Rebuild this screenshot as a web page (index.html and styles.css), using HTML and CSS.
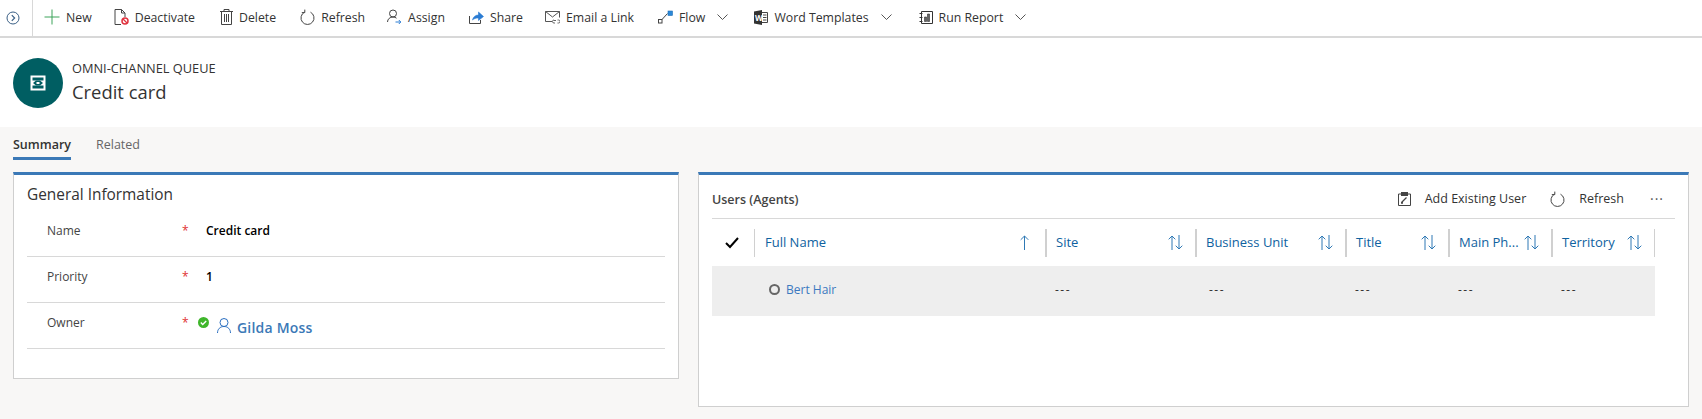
FILE: index.html
```html
<!DOCTYPE html>
<html lang="en">
<head>
    <meta charset="UTF-8">
    <meta name="viewport" content="width=device-width, initial-scale=1.0">
    <title>Credit card - Omni-channel Queue</title>
    <link rel="stylesheet" href="styles.css">
</head>
<body>
    <div class="commandbar">
        <div class="nav-toggle">
            <svg width="14" height="14" viewBox="0 0 14 14" fill="none" stroke="#3a5f85"><circle cx="7" cy="7" r="6"/><path d="M5.8 4.2 8.6 7 5.8 9.8" stroke-width="1.2"/></svg>
        </div>
        <div class="command cmd-new">
            <svg width="16" height="16" viewBox="0 0 16 16" stroke="#3da35a"><path d="M8 .5v15M.5 8h15"/></svg>
            <span>New</span>
        </div>
        <div class="command cmd-deactivate">
            <svg width="15" height="16" viewBox="0 0 15 16" fill="none" stroke="#444"><path d="M1 15.5V.5h6.500l3.500 3.500v4M7.500.5V4H11M1 15.500h6"/><circle cx="11" cy="12" r="3" stroke="#e0333f" stroke-width="1.500"/><path d="M9 10l4 4" stroke="#e0333f" stroke-width="1.300"/></svg>
            <span>Deactivate</span>
        </div>
        <div class="command cmd-delete">
            <svg width="13" height="16" viewBox="0 0 13 16" fill="none" stroke="#444"><path d="M0 2.500h13M4 2.500V.5h5v2M1.500 2.500v13h10v-13M4.500 5v8M6.500 5v8M8.500 5v8"/></svg>
            <span>Delete</span>
        </div>
        <div class="command cmd-refresh">
            <svg width="15" height="16" viewBox="0 0 15 16" fill="none" stroke="#444"><path d="M4.500 3.200a6.500 6.500 0 1 0 6 0M4.800 .6v3H1.800"/></svg>
            <span>Refresh</span>
        </div>
        <div class="command cmd-assign">
            <svg width="15" height="16" viewBox="0 0 15 16" fill="none" stroke="#444"><circle cx="6" cy="4.500" r="3.500"/><path d="M.5 13c0-3 2.500-5 5.500-5 1.500 0 2.600.4 3.500 1.200"/><path d="M8.500 13h5M11.800 11l2 2-2 2" stroke="#2b7cd3"/></svg>
            <span>Assign</span>
        </div>
        <div class="command cmd-share">
            <svg width="15" height="16" viewBox="0 0 15 16" fill="none" stroke="#444"><path d="M.5 7v7.500h11V11"/><path d="M3.500 11c.5-3 3-5 6-5V3l5 4.500-5 4V9c-2.500 0-4.500.5-6 2z" fill="#2b7cd3" stroke="#2b7cd3" stroke-width=".6"/></svg>
            <span>Share</span>
        </div>
        <div class="command cmd-email">
            <svg width="15" height="14" viewBox="0 0 15 14" fill="none" stroke="#555"><path d="M7 11.500H.5v-10h14v6"/><path d="M.5 1.500 7.500 7l7-5.500"/><path d="M9 10.500h2M10 13h-1a1.500 1.500 0 0 1 0-3M12.500 10h1a1.500 1.500 0 0 1 0 3h-1" stroke-width=".9"/></svg>
            <span>Email a Link</span>
        </div>
        <div class="command cmd-flow">
            <svg width="15" height="14" viewBox="0 0 15 14" fill="none"><rect x=".5" y="9.500" width="3.500" height="3.500" stroke="#444"/><path d="M4 9.500 9.500 3.500" stroke="#444"/><rect x="10" y="1" width="4.500" height="4.500" fill="#2b88d8" stroke="#1f6fb5" stroke-width=".6"/></svg>
            <span>Flow</span>
            <svg class="chev" width="11" height="6" viewBox="0 0 11 6" fill="none" stroke="#555"><path d="M.5.5l5 5 5-5"/></svg>
        </div>
        <div class="command cmd-word">
            <svg width="14" height="15" viewBox="0 0 14 15"><path d="M0 1.500 8 0v15l-8-1.500z" fill="#333"/><path d="M8 2.500h5.500v10H8" fill="#fff" stroke="#444"/><path d="M9 5h3.500M9 7.500h3.500M9 10h3.500" stroke="#444"/><text x="1" y="10.500" class="word-letter">W</text></svg>
            <span>Word Templates</span>
            <svg class="chev" width="11" height="6" viewBox="0 0 11 6" fill="none" stroke="#555"><path d="M.5.5l5 5 5-5"/></svg>
        </div>
        <div class="command cmd-report">
            <svg width="14" height="15" viewBox="0 0 14 15" fill="none" stroke="#333"><path d="M2.500 1.500h11v12h-11zM.5 3.500h3M.5 7.500h3M.5 11.500h3"/><path d="M5.500 7h2v4.500h-2zM8.500 4h2v7.500h-2z" fill="#666" stroke="#333" stroke-width=".6"/></svg>
            <span>Run Report</span>
            <svg class="chev" width="11" height="6" viewBox="0 0 11 6" fill="none" stroke="#555"><path d="M.5.5l5 5 5-5"/></svg>
        </div>
    </div>

    <div class="record-header">
        <div class="record-avatar">
            <svg width="16" height="16" viewBox="0 0 16 16"><rect x=".5" y=".5" width="15" height="15" fill="#fff"/><path d="M2.500 2.500h11v3h-11zM2.500 10.500h11v3h-11z" fill="#005e62"/><path d="M3 8l3-2.500h4L13 8l-3 2.500H6z" fill="#005e62"/><rect x="6.500" y="7" width="3" height="2" fill="#fff"/></svg>
        </div>
        <div class="record-title">
            <div class="record-type">OMNI-CHANNEL QUEUE</div>
            <div class="record-name">Credit card</div>
        </div>
    </div>

    <div class="content">
        <div class="tabs">
            <div class="tab tab-active">Summary</div>
            <div class="tab">Related</div>
        </div>

        <div class="panels">
            <div class="card card-general">
                <h2 class="card-title">General Information</h2>
                <div class="form-row">
                    <div class="form-label">Name</div>
                    <div class="required">*</div>
                    <div class="form-value">Credit card</div>
                </div>
                <div class="form-row">
                    <div class="form-label">Priority</div>
                    <div class="required">*</div>
                    <div class="form-value">1</div>
                </div>
                <div class="form-row">
                    <div class="form-label">Owner</div>
                    <div class="required">*</div>
                    <div class="owner">
                        <svg class="presence" width="11" height="11" viewBox="0 0 11 11"><circle cx="5.500" cy="5.500" r="5.500" fill="#3fb62b"/><path d="M2.800 5.600l1.900 1.900 3.500-3.500" fill="none" stroke="#fff" stroke-width="1.400"/></svg>
                        <svg class="person" width="14" height="15" viewBox="0 0 14 15" fill="none" stroke="#2b6fc0"><circle cx="7" cy="4.500" r="4"/><path d="M.5 15c0-3.800 2.600-6.500 6.500-6.500s6.500 2.700 6.500 6.500"/></svg>
                        <a class="owner-name">Gilda Moss</a>
                    </div>
                </div>
            </div>

            <div class="card card-users">
                <div class="grid-toolbar">
                    <div class="grid-name">Users (Agents)</div>
                    <div class="grid-actions">
                        <div class="grid-action action-add">
                            <svg width="13" height="14" viewBox="0 0 13 14" fill="none" stroke="#444"><path d="M3.500 2H.5v11.500h12V2h-3"/><rect x="3.500" y=".5" width="6" height="3" fill="#444"/><path d="M3.500 10.500l5-5M3 11h2" stroke-width="1.300"/></svg>
                            <span>Add Existing User</span>
                        </div>
                        <div class="grid-action action-refresh">
                            <svg width="15" height="16" viewBox="0 0 15 16" fill="none" stroke="#444"><path d="M4.500 3.200a6.500 6.500 0 1 0 6 0M4.800 .6v3H1.800"/></svg>
                            <span>Refresh</span>
                        </div>
                        <div class="grid-more">···</div>
                    </div>
                </div>

                <div class="grid-table">
                    <div class="grid-head">
                        <div class="head-check">
                            <svg width="14" height="12" viewBox="0 0 14 12" fill="none" stroke="#000" stroke-width="2"><path d="M1 6l4 4 8-9"/></svg>
                        </div>
                        <div class="head-cell"><span class="head-text">Full Name</span>
                            <svg class="sort-one" width="9" height="15" viewBox="0 0 9 15" fill="none" stroke="#2f79b5"><path d="M4.500 15V1M.7 4.800 4.500 1l3.800 3.800"/></svg>
                        </div>
                        <div class="head-cell thick"><span class="head-text">Site</span>
                            <svg width="15" height="15" viewBox="0 0 15 15" fill="none" stroke="#2f79b5"><path d="M4 15V1M.7 4.300 4 1l3.300 3.300M11 0v14M7.700 10.700 11 14l3.300-3.300"/></svg>
                        </div>
                        <div class="head-cell thick"><span class="head-text">Business Unit</span>
                            <svg width="15" height="15" viewBox="0 0 15 15" fill="none" stroke="#2f79b5"><path d="M4 15V1M.7 4.300 4 1l3.300 3.300M11 0v14M7.700 10.700 11 14l3.300-3.300"/></svg>
                        </div>
                        <div class="head-cell thick"><span class="head-text">Title</span>
                            <svg width="15" height="15" viewBox="0 0 15 15" fill="none" stroke="#2f79b5"><path d="M4 15V1M.7 4.300 4 1l3.300 3.300M11 0v14M7.700 10.700 11 14l3.300-3.300"/></svg>
                        </div>
                        <div class="head-cell thick"><span class="head-text">Main Ph...</span>
                            <svg width="15" height="15" viewBox="0 0 15 15" fill="none" stroke="#2f79b5"><path d="M4 15V1M.7 4.300 4 1l3.300 3.300M11 0v14M7.700 10.700 11 14l3.300-3.300"/></svg>
                        </div>
                        <div class="head-cell thick last"><span class="head-text">Territory</span>
                            <svg width="15" height="15" viewBox="0 0 15 15" fill="none" stroke="#2f79b5"><path d="M4 15V1M.7 4.300 4 1l3.300 3.300M11 0v14M7.700 10.700 11 14l3.300-3.300"/></svg>
                        </div>
                    </div>
                    <div class="grid-row">
                        <div></div>
                        <div class="cell-name"><span class="status-dot"></span><a class="user-link">Bert Hair</a></div>
                        <div class="cell">---</div>
                        <div class="cell cell-unit">---</div>
                        <div class="cell">---</div>
                        <div class="cell">---</div>
                        <div class="cell">---</div>
                    </div>
                </div>
            </div>
        </div>
    </div>
</body>
</html>
```

FILE: styles.css
```css
* {
    box-sizing: border-box;
}
html, body {
    height: 100%;
}
body {
    margin: 0;
    overflow: hidden;
    display: flex;
    flex-direction: column;
    font-family: "Open Sans", "Noto Sans", Arial, sans-serif;
    font-size: 12px;
    color: #333;
    background: #fff;
}

/* command bar */
.commandbar {
    display: flex;
    align-items: center;
    height: 38px;
    padding-bottom: 2px;
    border-bottom: 2px solid #d8d8d8;
    flex: none;
    font-size: 12.3px;
}
.nav-toggle {
    width: 33px;
    height: 36px;
    margin-bottom: -2px;
    padding-left: 6px;
    display: flex;
    align-items: center;
    border-right: 1px solid #d8d8d8;
}
.command {
    display: flex;
    align-items: center;
    white-space: nowrap;
    gap: 6px;
}
.chev {
    margin-left: 6px;
}
.cmd-new { margin-left: 11px; }
.cmd-deactivate { margin-left: 22px; }
.cmd-delete { margin-left: 25px; }
.cmd-refresh { margin-left: 24px; }
.cmd-assign { margin-left: 22px; }
.cmd-share { margin-left: 24px; }
.cmd-email { margin-left: 22px; }
.cmd-flow { margin-left: 24px; }
.cmd-word { margin-left: 26px; }
.cmd-report { margin-left: 27px; }
.word-letter {
    font-size: 8px;
    font-weight: 700;
    fill: #fff;
}

/* record header */
.record-header {
    display: flex;
    align-items: center;
    height: 89px;
    padding-left: 13px;
    flex: none;
}
.record-avatar {
    width: 50px;
    height: 50px;
    border-radius: 50%;
    background: #005e62;
    display: flex;
    align-items: center;
    justify-content: center;
    margin-right: 9px;
}
.record-type {
    font-size: 12.8px;
    line-height: 16px;
}
.record-name {
    margin-top: 2px;
    font-size: 18.4px;
    line-height: 28px;
}

/* tabs and cards */
.content {
    flex: 1;
    background: #f8f7f6;
    padding: 0 13px;
}
.tabs {
    display: flex;
    height: 45px;
    padding-top: 7px;
}
.tab {
    height: 26px;
    margin-right: 25px;
    font-size: 12.5px;
    color: #666;
    line-height: 22px;
}
.tab-active {
    font-weight: 600;
    color: #333;
    border-bottom: 3px solid #3b79b7;
    height: 26px;
}
.panels {
    display: flex;
    align-items: flex-start;
    gap: 19px;
}
.card {
    background: #fff;
    border: 1px solid #cfcfcf;
    border-top: 3px solid #3b79b7;
}
.card-general {
    width: 666px;
    height: 207px;
    padding: 0 13px;
}
.card-users {
    width: 991px;
    height: 235px;
    padding: 0 13px;
}
.card-title {
    margin: 0;
    height: 36px;
    font-size: 15.4px;
    font-weight: 400;
    line-height: 39px;
}
.form-row {
    display: grid;
    grid-template-columns: 155px 24px 1fr;
    height: 46px;
    padding-top: 11px;
    line-height: 18px;
    border-bottom: 1px solid #d8d8d8;
}
.form-label {
    padding-left: 20px;
    color: #444;
}
.required {
    color: #e03030;
}
.form-value {
    font-weight: 600;
    color: #000;
}
.owner {
    display: flex;
    margin-left: -8px;
}
.presence {
    margin-top: 3px;
}
.person {
    margin: 4px 6px 0 8px;
}
.owner-name {
    margin-top: 5px;
    font-size: 14px;
    letter-spacing: .2px;
    font-weight: 600;
    color: #3b79b7;
}

/* users grid */
.grid-toolbar {
    display: flex;
    align-items: center;
    justify-content: space-between;
    height: 44px;
    padding-top: 4px;
    border-bottom: 1px solid #d8d8d8;
    font-size: 12.5px;
}
.grid-name {
    margin-top: 2px;
    font-weight: 600;
    color: #444;
}
.grid-actions {
    display: flex;
    align-items: center;
    margin-right: 11px;
}
.grid-action {
    display: flex;
    align-items: center;
}
.action-add svg {
    margin-right: 14px;
}
.action-refresh {
    margin-left: 24px;
}
.action-refresh svg {
    margin-right: 14px;
}
.grid-more {
    margin-left: 26px;
    font-size: 14px;
    letter-spacing: 1px;
    color: #555;
}
.grid-table {
    width: 943px;
}
.grid-head,
.grid-row {
    display: grid;
    grid-template-columns: 42px 291px 150px 150px 103px 103px 104px;
}
.grid-head {
    height: 28px;
    margin-top: 10px;
}
.head-check {
    display: flex;
    align-items: center;
    padding-left: 13px;
}
.head-cell {
    display: flex;
    align-items: center;
    justify-content: space-between;
    padding: 0 12px 2px 10px;
    border-left: 1px solid #d0d0d0;
    font-size: 13px;
    color: #0f62a0;
}
.head-cell.thick {
    border-left-width: 2px;
    padding-left: 9px;
}
.head-cell.last {
    border-right: 1px solid #d0d0d0;
}
.sort-one {
    margin-right: 4px;
}
.grid-row {
    height: 50px;
    margin-top: 9px;
    padding-bottom: 4px;
    align-items: center;
    background: #eee;
}
.cell-name {
    display: flex;
    align-items: center;
    padding-left: 15px;
}
.status-dot {
    width: 11px;
    height: 11px;
    border: 2px solid #666;
    border-radius: 50%;
    margin-right: 6px;
}
.user-link {
    color: #3b79c0;
}
.cell {
    padding-left: 10px;
    letter-spacing: 1.5px;
}
.cell-unit {
    padding-left: 14px;
}
```
